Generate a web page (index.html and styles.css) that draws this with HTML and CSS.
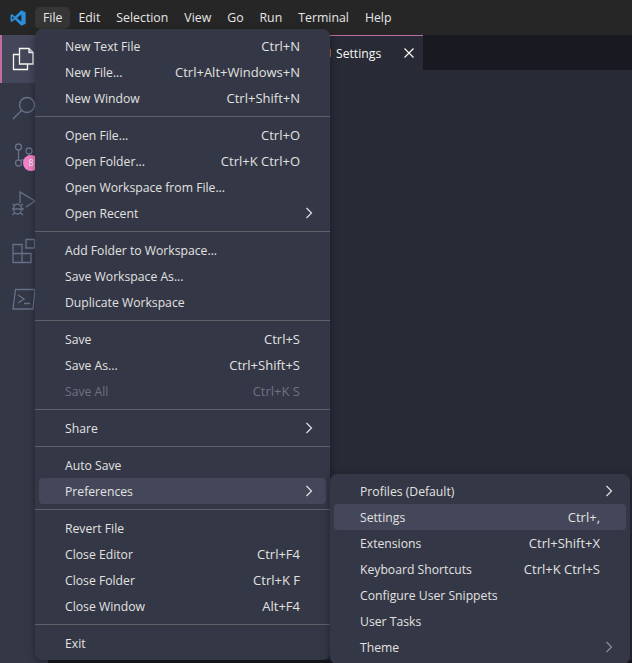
FILE: index.html
```html
<!DOCTYPE html>
<html lang="en">
<head>
    <meta charset="UTF-8">
    <meta name="viewport" content="width=device-width, initial-scale=1.0">
    <title>File menu - Preferences</title>
    <link rel="stylesheet" href="styles.css">
</head>
<body>

    <header class="titlebar">
        <svg class="logo" width="16" height="16" viewBox="0 0 18 18">
            <path d="M12.800 0.300 L17.600 2.600 V15.400 L12.800 17.700 L5.600 10.800 L2.200 13.400 L0.600 12.400 V5.600 L2.200 4.600 L5.600 7.200 Z" fill="#2b8fdc"/>
            <path d="M12.800 5 L7.800 9 L12.800 13 Z" fill="#262626"/>
            <path d="M2.400 6.900 L4.500 9 L2.400 11.100 Z" fill="#262626"/>
        </svg>
        <nav class="menubar">
            <span class="menubar-item menubar-open">File</span>
            <span class="menubar-item">Edit</span>
            <span class="menubar-item">Selection</span>
            <span class="menubar-item">View</span>
            <span class="menubar-item">Go</span>
            <span class="menubar-item">Run</span>
            <span class="menubar-item">Terminal</span>
            <span class="menubar-item">Help</span>
        </nav>
    </header>

    <div class="workbench">
        <aside class="activitybar">
            <div class="activity activity-on">
                <svg width="48" height="48" viewBox="0 35 48 48" fill="none" stroke="#f8f8f2" stroke-width="1.3">
                    <path d="M19.500 48.500 H29 L33 52.500 V64 H19.500 Z"/>
                    <path d="M29 48.500 L29 52.500 H33" fill="#8fa6d8"/>
                    <path d="M19.500 54.500 H13.500 V69.500 H27.500 V64"/>
                </svg>
            </div>
            <div class="activity">
                <svg width="48" height="48" viewBox="0 83 48 48" fill="none" stroke="#667089" stroke-width="1.4">
                    <circle cx="27" cy="105" r="7.500"/>
                    <path d="M21.500 110.500 L13 119"/>
                </svg>
            </div>
            <div class="activity">
                <svg width="48" height="48" viewBox="0 131 48 48" fill="none" stroke="#667089" stroke-width="1.3">
                    <circle cx="18.500" cy="147" r="3"/>
                    <circle cx="18.500" cy="163" r="3"/>
                    <circle cx="29" cy="151" r="3"/>
                    <path d="M18.500 150 V160 M21 160 H24 Q29 160 29 154"/>
                </svg>
                <span class="badge">8</span>
            </div>
            <div class="activity">
                <svg width="48" height="48" viewBox="0 179 48 48" fill="none" stroke="#667089" stroke-width="1.3">
                    <path d="M20 203 V192 L35 201 L26 207"/>
                    <ellipse cx="17.500" cy="209" rx="4" ry="5"/>
                    <path d="M12 209 H24 M12.500 204 L15 206 M23 204 L20 206 M12.500 215 L15 212.500 M23 215 L20 212.500"/>
                </svg>
            </div>
            <div class="activity">
                <svg width="48" height="48" viewBox="0 227 48 48" fill="none" stroke="#667089" stroke-width="1.3">
                    <path d="M13 244.500 H22 V262.500 H13 Z M13 253.500 H31 V262.500 H22"/>
                    <path d="M26 239.500 H34.500 V248 H26 Z"/>
                </svg>
            </div>
            <div class="activity">
                <svg width="48" height="48" viewBox="0 275 48 48" fill="none" stroke="#667089" stroke-width="1.3">
                    <path d="M15.500 289.500 H35 L33 309 H13 Z"/>
                    <path d="M18 295 L24 299 L18 303 M24 303.500 H30"/>
                </svg>
            </div>
        </aside>

        <main class="editor">
            <div class="tabs">
                <div class="tab">
                    <span class="tab-icon"></span>
                    <span class="tab-label">Settings</span>
                    <svg class="tab-close" width="10" height="10" viewBox="0 0 10 10" stroke="#f8f8f2" stroke-width="1.2">
                        <path d="M0.500 0.500 L9.500 9.500 M9.500 0.500 L0.500 9.500"/>
                    </svg>
                </div>
            </div>
        </main>
    </div>
    <footer class="statusbar"><span class="status-remote"></span></footer>

    <div class="menu file-menu">
        <div class="row"><span>New Text File</span><span class="keys">Ctrl+N</span></div>
        <div class="row"><span>New File...</span><span class="keys">Ctrl+Alt+Windows+N</span></div>
        <div class="row"><span>New Window</span><span class="keys">Ctrl+Shift+N</span></div>
        <div class="sep"></div>
        <div class="row"><span>Open File...</span><span class="keys">Ctrl+O</span></div>
        <div class="row"><span>Open Folder...</span><span class="keys">Ctrl+K Ctrl+O</span></div>
        <div class="row"><span>Open Workspace from File...</span></div>
        <div class="row"><span>Open Recent</span><svg class="chev" width="8" height="12" viewBox="0 0 8 12"><path d="M1.500 1 L6.500 6 L1.500 11"/></svg></div>
        <div class="sep"></div>
        <div class="row"><span>Add Folder to Workspace...</span></div>
        <div class="row"><span>Save Workspace As...</span></div>
        <div class="row"><span>Duplicate Workspace</span></div>
        <div class="sep"></div>
        <div class="row"><span>Save</span><span class="keys">Ctrl+S</span></div>
        <div class="row"><span>Save As...</span><span class="keys">Ctrl+Shift+S</span></div>
        <div class="row row-off"><span>Save All</span><span class="keys">Ctrl+K S</span></div>
        <div class="sep"></div>
        <div class="row"><span>Share</span><svg class="chev" width="8" height="12" viewBox="0 0 8 12"><path d="M1.500 1 L6.500 6 L1.500 11"/></svg></div>
        <div class="sep"></div>
        <div class="row"><span>Auto Save</span></div>
        <div class="row row-on"><span>Preferences</span><svg class="chev" width="8" height="12" viewBox="0 0 8 12"><path d="M1.500 1 L6.500 6 L1.500 11"/></svg></div>
        <div class="sep"></div>
        <div class="row"><span>Revert File</span></div>
        <div class="row"><span>Close Editor</span><span class="keys">Ctrl+F4</span></div>
        <div class="row"><span>Close Folder</span><span class="keys">Ctrl+K F</span></div>
        <div class="row"><span>Close Window</span><span class="keys">Alt+F4</span></div>
        <div class="sep"></div>
        <div class="row"><span>Exit</span></div>
    </div>

    <div class="menu sub-menu">
        <div class="row"><span>Profiles (Default)</span><svg class="chev" width="8" height="12" viewBox="0 0 8 12"><path d="M1.500 1 L6.500 6 L1.500 11"/></svg></div>
        <div class="row row-on"><span>Settings</span><span class="keys">Ctrl+,</span></div>
        <div class="row"><span>Extensions</span><span class="keys">Ctrl+Shift+X</span></div>
        <div class="row"><span>Keyboard Shortcuts</span><span class="keys">Ctrl+K Ctrl+S</span></div>
        <div class="row"><span>Configure User Snippets</span></div>
        <div class="row"><span>User Tasks</span></div>
        <div class="row"><span>Theme</span><svg class="chev chev-dim" width="8" height="12" viewBox="0 0 8 12"><path d="M1.500 1 L6.500 6 L1.500 11"/></svg></div>
    </div>

</body>
</html>
```

FILE: styles.css
```css
html, body { height: 100%; }
body { margin: 0; height: 663px; overflow: hidden; display: flex; flex-direction: column; background: #282a36; color: #f8f8f2; font-family: "Open Sans", "Noto Sans", sans-serif; font-size: 12.2px; }

.titlebar { height: 35px; flex: none; display: flex; align-items: center; background: #262626; }
.logo { margin-left: 10px; margin-right: 9px; }
.menubar { display: flex; font-size: 12.3px; }
.menubar-item { padding: 0 8px; height: 22px; line-height: 22px; border-radius: 5px; color: #e6e6e6; }
.menubar-open { background: #363636; }

.workbench { flex: 1; display: flex; min-height: 0; }
.activitybar { width: 48px; flex: none; background: #343746; }
.activity { position: relative; height: 48px; }
.activity svg { display: block; }
.activity-on { background: #44475a; box-shadow: inset 2px 0 0 #bd6e9f; }
.badge { position: absolute; left: 23px; top: 24px; width: 16px; height: 16px; border-radius: 50%; background: #f280c6; color: #f8f8f2; font-size: 9px; line-height: 16px; text-align: center; }

.editor { flex: 1; }
.tabs { height: 35px; background: #191a21; display: flex; }
.tab { margin-left: 270px; width: 105px; box-sizing: border-box; background: #282a36; border-top: 1px solid #bd6e9f; display: flex; align-items: center; padding-left: 10px; }
.tab-icon { width: 3px; height: 8px; background: #b5683a; }
.tab-label { margin-left: 5px; width: 68px; color: #f8f8f2; }
.tab-close { flex: none; }

.statusbar { height: 3px; flex: none; background: #191a21; }
.status-remote { display: block; width: 48px; height: 3px; background: #343746; }

.menu { position: absolute; box-sizing: border-box; padding: 4px; background: #343746; border-radius: 7px; box-shadow: 0 2px 8px rgba(0, 0, 0, 0.36); color: #e2e2e0; }
.file-menu { left: 35px; top: 29px; width: 295px; height: 631px; }
.sub-menu { left: 330px; top: 474px; width: 300px; height: 190px; }

.row { height: 26px; display: flex; align-items: center; justify-content: space-between; padding: 0 26px; border-radius: 4px; }
.row-on { background: #44475a; }
.row-off { color: #6f7180; }
.keys { margin-left: 20px; font-size: 13px; }
.sep { height: 1px; margin: 5px -4px; background: #5f6068; }
.chev { fill: none; stroke: #e2e2e0; stroke-width: 1.2; margin-right: -13px; }
.chev-dim { stroke: #8c8e98; }
```
